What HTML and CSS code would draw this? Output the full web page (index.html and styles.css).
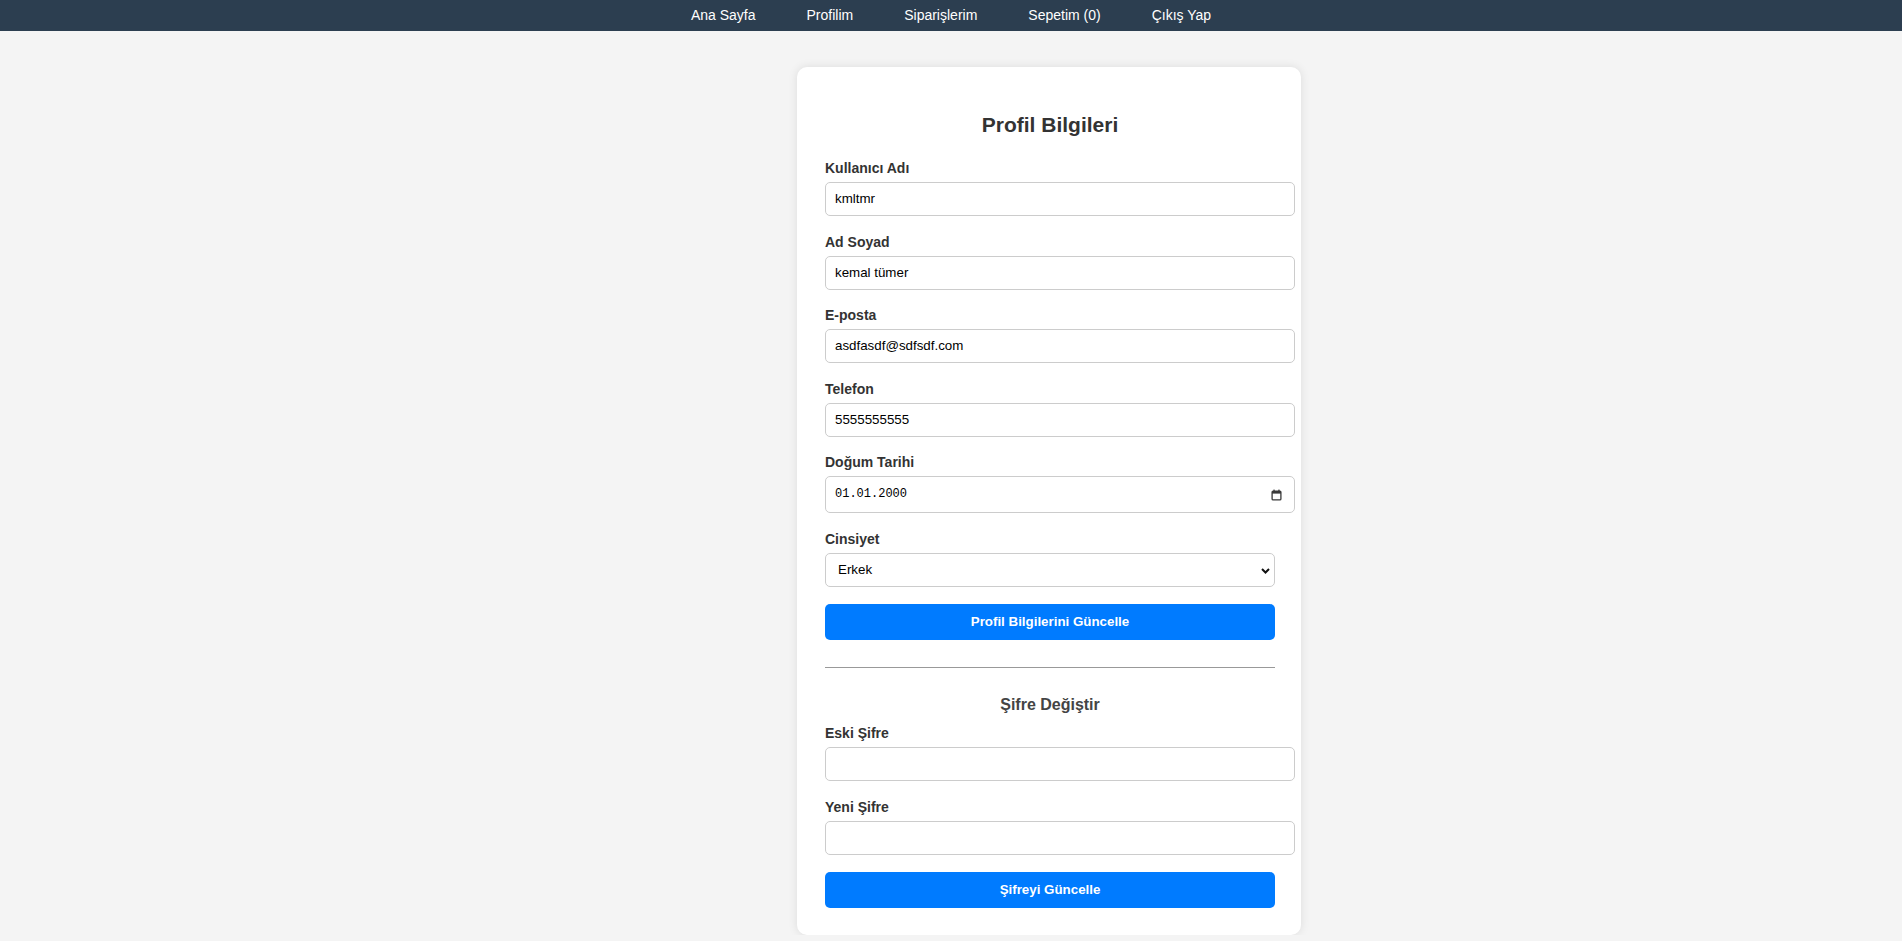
FILE: index.html
```html
<!DOCTYPE html>
<html lang="tr">
<head>
<meta charset="utf-8">
<title>Profil Bilgileri</title>
<link rel="stylesheet" href="styles.css">
</head>
<body>
<nav class="topnav">
  <a href="#">Ana Sayfa</a>
  <a href="#">Profilim</a>
  <a href="#">Siparişlerim</a>
  <a href="#">Sepetim (0)</a>
  <a href="#">Çıkış Yap</a>
</nav>
<main class="page">
  <section class="card">
    <h2 class="card-title">Profil Bilgileri</h2>
    <form class="form">
      <div class="group">
        <label class="label">Kullanıcı Adı</label>
        <input class="field" type="text" value="kmltmr">
      </div>
      <div class="group">
        <label class="label">Ad Soyad</label>
        <input class="field" type="text" value="kemal tümer">
      </div>
      <div class="group">
        <label class="label">E-posta</label>
        <input class="field" type="text" value="asdfasdf@sdfsdf.com">
      </div>
      <div class="group">
        <label class="label">Telefon</label>
        <input class="field" type="text" value="5555555555">
      </div>
      <div class="group">
        <label class="label">Doğum Tarihi</label>
        <div class="date-wrap">
          <input class="field date" type="text" value="01.01.2000">
          <svg class="cal-icon" width="11" height="12" viewBox="0 0 11 12"><rect x="1.1" y="2.1" width="8.8" height="8.8" rx="1" fill="none" stroke="#3a3a3a" stroke-width="1.3"/><rect x="1" y="2" width="9" height="2.6" fill="#3a3a3a"/><rect x="2.4" y="0.6" width="1.3" height="2" fill="#3a3a3a"/><rect x="7.3" y="0.6" width="1.3" height="2" fill="#3a3a3a"/></svg>
        </div>
      </div>
      <div class="group">
        <label class="label">Cinsiyet</label>
        <div class="select-wrap">
          <select class="select">
            <option selected>Erkek</option>
            <option>Kadın</option>
          </select>
          <svg class="chevron" width="9" height="6" viewBox="0 0 9 6"><path d="M1 1l3.5 3.5L8 1" stroke="#111" stroke-width="2" fill="none"/></svg>
        </div>
      </div>
      <button class="btn" type="button">Profil Bilgilerini Güncelle</button>
    </form>
    <hr class="divider">
    <h3 class="sub-title">Şifre Değiştir</h3>
    <form class="form">
      <div class="group">
        <label class="label">Eski Şifre</label>
        <input class="field" type="password">
      </div>
      <div class="group">
        <label class="label">Yeni Şifre</label>
        <input class="field" type="password">
      </div>
      <button class="btn" type="button">Şifreyi Güncelle</button>
    </form>
  </section>
</main>
</body>
</html>
```
FILE: styles.css
```css
* { margin: 0; }
body {
  margin: 0;
  background: #f4f4f4;
  font-family: "Liberation Sans", Arial, sans-serif;
  font-size: 14px;
  color: #333;
}
.topnav {
  background: #2c3e50;
  display: flex;
  justify-content: center;
  gap: 51px;
  padding: 7px 0;
}
.topnav a {
  color: #fff;
  text-decoration: none;
  font-size: 14px;
  line-height: 17px;
}
.page {
  display: flex;
  justify-content: center;
  padding-left: 196px;
  margin-top: 36px;
}
.card {
  width: 450px;
  padding: 28px 26px 27px 28px;
  background: #fff;
  border-radius: 10px;
  box-shadow: 0 0 10px rgba(0, 0, 0, 0.1);
}
.card-title {
  font-size: 21px;
  line-height: 24px;
  font-weight: bold;
  text-align: center;
  color: #333;
  margin: 18px 0 23px;
}
.group {
  margin-bottom: 17.5px;
}
.label {
  display: block;
  font-size: 14px;
  line-height: 16px;
  font-weight: bold;
  color: #333;
  margin-bottom: 6px;
}
.field {
  display: block;
  width: 100%;
  padding: 8px 9px;
  border: 1px solid #ccc;
  border-radius: 5px;
  font-family: "Liberation Sans", Arial, sans-serif;
  font-size: 13.33px;
  line-height: 16px;
  color: #000;
  background: #fff;
  outline: none;
}
.date-wrap, .select-wrap {
  position: relative;
}
.field.date {
  padding: 10px 9px 11px;
  font-family: "Liberation Mono", "DejaVu Sans Mono", monospace;
  font-size: 12px;
  line-height: 14px;
}
.cal-icon {
  position: absolute;
  left: 446px;
  top: 13px;
}
.select {
  display: block;
  width: 100%;
  box-sizing: border-box;
  -webkit-appearance: none;
  appearance: none;
  padding: 8px 12px;
  border: 1px solid #ccc;
  border-radius: 5px;
  font-family: "Liberation Sans", Arial, sans-serif;
  font-size: 13.33px;
  line-height: 16px;
  color: #000;
  background: #fff;
}
.chevron {
  position: absolute;
  right: 5px;
  top: 15px;
  pointer-events: none;
}
.btn {
  display: block;
  width: 100%;
  padding: 10px;
  border: none;
  border-radius: 5px;
  background: #007bff;
  color: #fff;
  font-family: "Liberation Sans", Arial, sans-serif;
  font-size: 13.33px;
  line-height: 16px;
  font-weight: bold;
}
.divider {
  border: none;
  border-top: 1px solid #999;
  margin: 27px 0 28px;
}
.sub-title {
  font-size: 16px;
  line-height: 18px;
  font-weight: bold;
  text-align: center;
  color: #444;
  margin-bottom: 11px;
}
```
